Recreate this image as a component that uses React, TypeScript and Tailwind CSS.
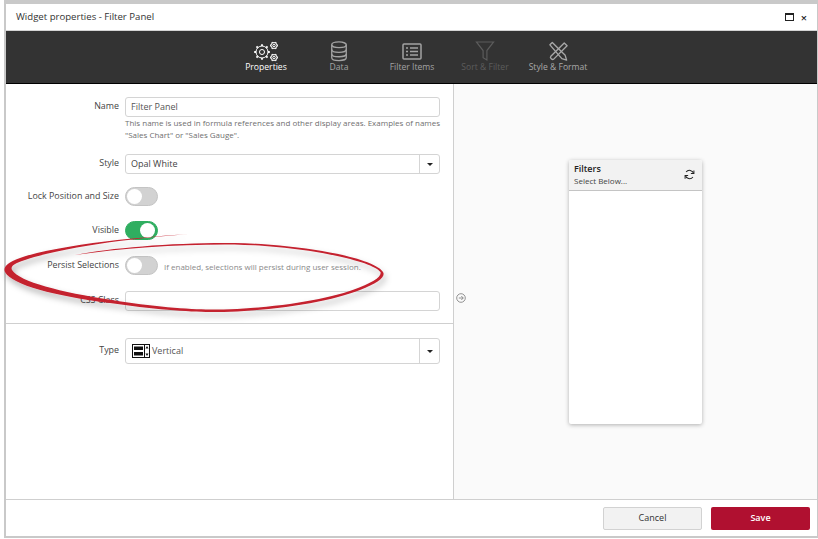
import React from "react";

const Toggle = ({ on }: { on?: boolean }) => (
  <div className={`w-[33px] h-[19px] rounded-full flex items-center shrink-0 border ${on ? "bg-[#2fae60] border-[#2fae60] justify-end pr-[2px]" : "bg-[#d2d2d2] border-[#c4c4c4] pl-[1px]"}`}>
    <div className="w-[15px] h-[15px] rounded-full bg-white" />
  </div>
);

const Caret = () => (
  <div className="w-[20px] self-stretch border-l border-[#d5d5d5] flex items-center justify-center shrink-0">
    <div className="w-0 h-0 border-l-[3.5px] border-r-[3.5px] border-t-[3.5px] border-l-transparent border-r-transparent border-t-[#222]" />
  </div>
);

const Row = ({ label, h, className = "", children }: { label: string; h: number; className?: string; children: React.ReactNode }) => (
  <div className={`flex items-center ${className}`} style={{ height: h }}>
    <div className="w-[113px] text-right text-[8.9px] text-[#444] shrink-0 -mt-[2px] whitespace-nowrap">{label}</div>
    <div className="ml-[6px] flex-1 flex items-center min-w-0 h-full">{children}</div>
  </div>
);

const Nav = ({ label, color, w, children }: { label: string; color: string; w: number; children: React.ReactNode }) => (
  <div className="flex flex-col items-center shrink-0" style={{ width: w, color }}>
    <div className="h-[22px] flex items-center justify-center">{children}</div>
    <div className="text-[8.6px] leading-[11px] whitespace-nowrap">{label}</div>
  </div>
);

const Gear = ({ cx, cy, r, teeth }: { cx: number; cy: number; r: number; teeth: number }) => (
  <g>
    <circle cx={cx} cy={cy} r={r} />
    <circle cx={cx} cy={cy} r={r * 0.42} />
    {Array.from({ length: teeth }).map((_, i) => {
      const a = (i / teeth) * Math.PI * 2;
      return <line key={i} x1={cx + Math.cos(a) * r} y1={cy + Math.sin(a) * r} x2={cx + Math.cos(a) * r * 1.3} y2={cy + Math.sin(a) * r * 1.3} strokeWidth={1.8} />;
    })}
  </g>
);

export default function App() {
  return (
    <div className="w-[818px] h-[539px] bg-white pl-[4px] overflow-hidden relative" style={{ fontFamily: '"Open Sans", sans-serif' }}>
      <div className="h-[538px] bg-[#c9c9c9] pt-[4px] pl-[2px] pr-[1px] pb-[2px]">
        <div className="h-full w-full bg-white flex flex-col">
          <div className="h-[27px] shrink-0 flex items-center pl-[10px] pr-[10px] border-b border-[#d4d4d4]">
            <div className="text-[9.6px] text-[#333] flex-1">Widget properties - Filter Panel</div>
            <div className="w-[9px] h-[8px] border border-[#222] border-t-[2px] mr-[7px]" />
            <div className="text-[11px] leading-none text-[#222] font-semibold">×</div>
          </div>
          <div className="h-[53px] shrink-0 bg-[#333333] border-b border-black flex justify-center pl-[1px] pt-[9px]">
            <div className="flex">
              <Nav label="Properties" color="#ffffff" w={73}>
                <svg width="27" height="21" viewBox="0 0 27 21" fill="none" stroke="currentColor" strokeWidth="1">
                  <Gear cx={9} cy={11} r={6} teeth={8} />
                  <Gear cx={21} cy={4.5} r={3} teeth={6} />
                  <Gear cx={21} cy={16.5} r={3} teeth={6} />
                </svg>
              </Nav>
              <Nav label="Data" color="#a3a3a3" w={73}>
                <svg width="18" height="21" viewBox="0 0 18 22" fill="none" stroke="currentColor" strokeWidth="1.4">
                  <ellipse cx="9" cy="4" rx="7.6" ry="3" />
                  <path d="M1.4 4v13.5c0 1.7 3.4 3 7.6 3s7.6-1.3 7.6-3V4" />
                  <path d="M1.4 9c0 1.7 3.4 3 7.6 3s7.6-1.3 7.6-3" />
                  <path d="M1.4 13.5c0 1.7 3.4 3 7.6 3s7.6-1.3 7.6-3" />
                </svg>
              </Nav>
              <Nav label="Filter Items" color="#a3a3a3" w={73}>
                <svg width="20" height="17" viewBox="0 0 20 17" fill="none" stroke="currentColor" strokeWidth="1.5">
                  <rect x="1" y="1" width="18" height="15" rx="1" />
                  <path d="M4 5h2M4 8.5h2M4 12h2M8 5h8M8 8.5h8M8 12h8" />
                </svg>
              </Nav>
              <Nav label="Sort & Filter" color="#5c5c5c" w={73}>
                <svg width="20" height="21" viewBox="0 0 20 22" fill="none" stroke="currentColor" strokeWidth="1.2">
                  <path d="M1 1h18l-7 9v10l-4-2.5V10z" />
                </svg>
              </Nav>
              <Nav label="Style & Format" color="#a8a8a8" w={73}>
                <svg width="21" height="21" viewBox="0 0 22 22" fill="none" stroke="currentColor" strokeWidth="1.4" strokeLinejoin="round">
                  <path d="M2 4l2.500-2.500L18 15l1.500 5-5-1.500z" />
                  <path d="M17 2l3 3L6 19c-1.500 1.500-4.500-1.500-3-3z" />
                </svg>
              </Nav>
            </div>
          </div>
          <div className="flex-1 flex min-h-0">
            <div className="w-[448px] shrink-0 border-r border-[#cfcfcf] flex flex-col pr-[13px]">
              <Row label="Name" h={20} className="mt-[13px]">
                <div className="w-full h-[20px] border border-[#d4d4d4] rounded-[3px] flex items-center pl-[5px] text-[9px] text-[#555]">Filter Panel</div>
              </Row>
              <div className="ml-[119px] text-[8px] leading-[12px] text-[#6f6f6f] whitespace-nowrap">
                This name is used in formula references and other display areas. Examples of names<br />"Sales Chart" or "Sales Gauge".
              </div>
              <Row label="Style" h={20} className="mt-[13px]">
                <div className="w-full h-[20px] border border-[#d4d4d4] rounded-[3px] flex items-center pl-[5px] text-[9px] text-[#444]">
                  <span className="flex-1">Opal White</span>
                  <Caret />
                </div>
              </Row>
              <Row label="Lock Position and Size" h={19} className="mt-[13px]"><Toggle /></Row>
              <Row label="Visible" h={19} className="mt-[15px]"><Toggle on /></Row>
              <Row label="Persist Selections" h={19} className="mt-[16px]">
                <Toggle />
                <span className="ml-[6px] text-[8px] text-[#8a8a8a] whitespace-nowrap mt-[2px]">If enabled, selections will persist during user session.</span>
              </Row>
              <Row label="CSS Class" h={20} className="mt-[16px]">
                <div className="w-full h-[20px] border border-[#d4d4d4] rounded-[3px]" />
              </Row>
              <div className="border-t border-[#cfcfcf] mt-[12px] -mr-[13px]" />
              <Row label="Type" h={26} className="mt-[14px]">
                <div className="w-full h-[26px] border border-[#d4d4d4] rounded-[3px] flex items-center pl-[6px] text-[9px] text-[#555]">
                  <svg width="18" height="14" viewBox="0 0 18 14" className="shrink-0 mr-[2px]">
                    <rect width="18" height="14" fill="#111" />
                    <rect x="1" y="1" width="11" height="12" fill="#fff" />
                    <rect x="2" y="2.500" width="9" height="3.500" fill="#111" />
                    <rect x="2" y="8" width="9" height="3.500" fill="#111" />
                    <rect x="13" y="1" width="4" height="12" fill="#fff" />
                    <path d="M15 2l1.500 2.500h-3zM15 12l1.500-2.500h-3z" fill="#111" />
                  </svg>
                  <span className="flex-1">Vertical</span>
                  <Caret />
                </div>
              </Row>
            </div>
            <div className="flex-1 bg-[#fafafa] flex items-center relative min-w-0">
              <svg width="10" height="10" viewBox="0 0 10 10" fill="none" stroke="#777" strokeWidth="0.8" className="absolute left-[2px] top-[209px]">
                <circle cx="5" cy="5" r="4.3" />
                <path d="M2.800 5h4.400M5.300 3l2 2-2 2" />
              </svg>
              <div className="ml-[115px] w-[133px] h-[264px] bg-white rounded-[2px] shadow-[0_1px_4px_rgba(0,0,0,0.3)] flex flex-col">
                <div className="h-[31px] bg-[#f2f2f2] border-b border-[#c4c4c4] flex items-center pl-[5px] pr-[7px] rounded-t-[2px]">
                  <div className="flex-1 flex flex-col">
                    <span className="text-[9px] leading-[12px] font-semibold text-[#222]">Filters</span>
                    <span className="text-[8px] leading-[11px] text-[#444]">Select Below...</span>
                  </div>
                  <svg width="11" height="11" viewBox="0 0 12 12" fill="none" stroke="#222" strokeWidth="1.1">
                    <path d="M10.500 5A4.600 4.600 0 0 0 2.300 3.300" />
                    <path d="M1.500 7a4.600 4.600 0 0 0 8.200 1.700" />
                    <path d="M10.800 1.500V5H7.500" />
                    <path d="M1.200 10.500V7h3.300" />
                  </svg>
                </div>
              </div>
            </div>
          </div>
          <div className="h-[37px] shrink-0 border-t border-[#cfcfcf] flex items-center justify-end gap-[9px] pr-[7px]">
            <button className="w-[99px] h-[23px] rounded-[2px] bg-[#f2f2f2] border border-[#d2d2d2] text-[9px] text-[#333]">Cancel</button>
            <button className="w-[99px] h-[23px] rounded-[2px] bg-[#b01030] text-[9px] font-semibold text-white">Save</button>
          </div>
        </div>
      </div>
      <svg width="818" height="539" viewBox="0 0 818 539" className="absolute left-0 top-0 pointer-events-none">
        <defs>
          <filter id="s" x="-10%" y="-20%" width="120%" height="150%">
            <feDropShadow dx="2" dy="4" stdDeviation="3" floodColor="#000" floodOpacity="0.3" />
          </filter>
        </defs>
        <path
          filter="url(#s)"
          fill="#c4202f"
          d="M192 234 C150 236 60 244 20 258 C6 263 3 268 5 272 C12 285 55 296 110 303 C150 309 190 312 210 312 C270 312 330 302 360 290 C378 283 386 277 383 272 C375 258 300 243 225 243 C170 243 110 248 75 255 C120 248.500 175 244.500 225 244.500 C295 244.500 372 260 380.500 272 C382 277 372 283 354 289.500 C322 301 265 309.500 210 309.500 C190 309.500 150 306.500 112 300 C60 292 20 282 12 270 C10 266 15 263 25 260 C60 248 130 238 192 234 Z"
        />
      </svg>
    </div>
  );
}
